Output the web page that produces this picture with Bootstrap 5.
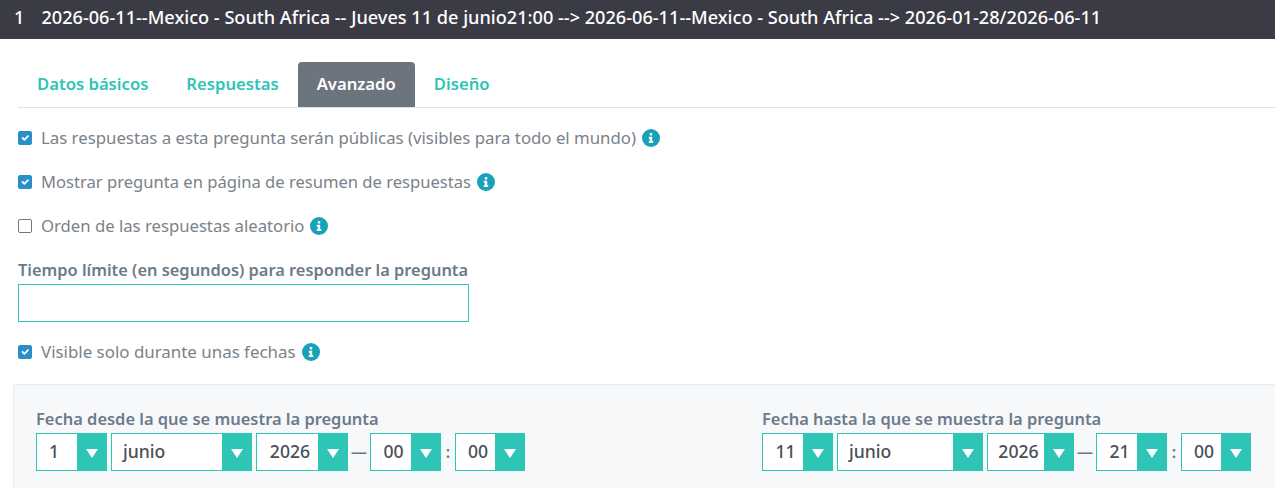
<!DOCTYPE html>
<html lang="es">
<head>
<meta charset="utf-8">
<title>Pregunta</title>
<link rel="stylesheet" href="https://cdn.jsdelivr.net/npm/bootstrap@5.3.0/dist/css/bootstrap.min.css">
<style>
html,body{height:488px;overflow:hidden}
body{font-family:"Noto Sans","Liberation Sans",sans-serif;font-size:16px;color:#6c757d;background:#fff}
.qhead{height:39px;background:#3b3b46;color:#fff;font-weight:500;font-size:18.15px;line-height:35px;padding-left:14px;white-space:nowrap}
.qhead b{font-weight:500;margin-right:17px}
.tabstrip{margin:23px 0 0 18px;border-bottom:1px solid #dee2e6;height:46px}
.tabstrip .nav-link{color:#2ec4b6;font-weight:600;font-size:16.65px;height:45px;padding:10px 19px 8px;border-radius:4px 4px 0 0}
.tabstrip .nav-link.active{background:#6c757d;color:#fff}
.formarea{padding:19px 0 0 18px}
.chk{display:flex;align-items:center;height:22px;margin-bottom:22px;padding:0;min-height:0}
.chk .form-check-input{float:none;margin:0 9px 0 0;width:14px;height:14px;border-radius:2px;border-color:#767676}
.chk .form-check-input:checked{background-color:#2a8fc9;border-color:#2a8fc9}
.chk .form-check-label{color:#7a828a;font-size:16.7px}
.chk .form-check-label.lbl-a{font-size:16.8px}
.chk .form-check-label.lbl-b{font-size:16.58px}
.chk .form-check-label.lbl-c{font-size:16.9px}
.infoic{margin-left:6px;width:18px;height:18px;flex:none}
.fieldlbl{font-weight:600;color:#6c7a89;font-size:16.4px;margin:0;line-height:22px;display:block}
.limitbox{width:451px;height:38px;border:1px solid #2ec4b6;border-radius:0;margin-top:3px;margin-bottom:19px;display:block;padding:0 8px}
.datepanel{margin-left:13px;margin-top:21px;background:#f6f8fa;border-left:1px solid #e9ecef;border-top:1px solid #e9ecef;height:104px;padding:21px 0 0 22px;display:flex}
.datecol{flex:none;width:726px}
.datecol:last-child{flex:1 1 0;width:auto;min-width:0}
.datecol .fieldlbl{line-height:25px;height:22px;font-size:16.45px}
.dtrow{display:flex;align-items:center;margin-top:5px;height:38px}
.pick{display:flex;height:38px;border:1px solid #2ec4b6;background:#fff;margin-right:4px}
.pick .val{flex:1 1 auto;color:#495057;font-size:17.6px;font-weight:500;line-height:34px;padding-left:11px}
.pick .val.ctr{padding-left:5px;padding-right:0;text-align:center}
.pick .val.oneval{padding-left:0;padding-right:6px}
.pick .drop{flex:none;width:30px;background:#2ec4b6;display:flex;align-items:center;justify-content:center;margin:-1px -1px -1px 0;padding-top:2px}
.sepc{width:22px;flex:none;text-align:center;color:#6c757d;margin-left:-4px;font-weight:600}
.sepn{width:14px;flex:none;text-align:center;color:#6c757d;font-weight:600;margin-left:-4px}
.sepn+.pick{margin-right:0}
.w71{width:71px}.w141{width:141px}.w92{width:92px}.w70{width:70px}.w146{width:146px}.w87{width:87px}
</style>
</head>
<body>
<div class="qhead"><b>1</b>2026-06-11--Mexico - South Africa -- Jueves 11 de junio21:00 --&gt; 2026-06-11--Mexico - South Africa --&gt; 2026-01-28/2026-06-11</div>
<ul class="nav tabstrip">
<li class="nav-item"><a class="nav-link" href="#">Datos básicos</a></li>
<li class="nav-item"><a class="nav-link" href="#">Respuestas</a></li>
<li class="nav-item"><a class="nav-link active" href="#">Avanzado</a></li>
<li class="nav-item"><a class="nav-link" href="#">Diseño</a></li>
</ul>
<div class="formarea">
<div class="form-check chk"><input class="form-check-input" type="checkbox" checked id="c1"><label class="form-check-label lbl-a" for="c1">Las respuestas a esta pregunta serán públicas (visibles para todo el mundo)</label>
<svg class="infoic" viewBox="0 0 18 18"><circle cx="9" cy="9" r="9" fill="#17a2b8"/><rect x="7.8" y="4" width="2.4" height="2.4" rx=".5" fill="#fff"/><path d="M6.8 7.8h3.4v4.2h1v2H6.8v-2h1V9.8h-1z" fill="#fff"/></svg></div>
<div class="form-check chk"><input class="form-check-input" type="checkbox" checked id="c2"><label class="form-check-label lbl-b" for="c2">Mostrar pregunta en página de resumen de respuestas</label>
<svg class="infoic" viewBox="0 0 18 18"><circle cx="9" cy="9" r="9" fill="#17a2b8"/><rect x="7.8" y="4" width="2.4" height="2.4" rx=".5" fill="#fff"/><path d="M6.8 7.8h3.4v4.2h1v2H6.8v-2h1V9.8h-1z" fill="#fff"/></svg></div>
<div class="form-check chk"><input class="form-check-input" type="checkbox" id="c3"><label class="form-check-label" for="c3">Orden de las respuestas aleatorio</label>
<svg class="infoic" viewBox="0 0 18 18"><circle cx="9" cy="9" r="9" fill="#17a2b8"/><rect x="7.8" y="4" width="2.4" height="2.4" rx=".5" fill="#fff"/><path d="M6.8 7.8h3.4v4.2h1v2H6.8v-2h1V9.8h-1z" fill="#fff"/></svg></div>
<label class="fieldlbl" for="lim">Tiempo límite (en segundos) para responder la pregunta</label>
<input class="limitbox" id="lim" type="text">
<div class="form-check chk mb-0"><input class="form-check-input" type="checkbox" checked id="c4"><label class="form-check-label lbl-c" for="c4">Visible solo durante unas fechas</label>
<svg class="infoic" viewBox="0 0 18 18"><circle cx="9" cy="9" r="9" fill="#17a2b8"/><rect x="7.8" y="4" width="2.4" height="2.4" rx=".5" fill="#fff"/><path d="M6.8 7.8h3.4v4.2h1v2H6.8v-2h1V9.8h-1z" fill="#fff"/></svg></div>
</div>
<div class="datepanel">
<div class="datecol">
<div class="fieldlbl">Fecha desde la que se muestra la pregunta</div>
<div class="dtrow">
<div class="pick w71"><span class="val ctr oneval">1</span><span class="drop"><svg width="12" height="9" viewBox="0 0 12 9"><path d="M0 0h12L6 9z" fill="#fff"/></svg></span></div>
<div class="pick w141"><span class="val">junio</span><span class="drop"><svg width="12" height="9" viewBox="0 0 12 9"><path d="M0 0h12L6 9z" fill="#fff"/></svg></span></div>
<div class="pick w92"><span class="val ctr">2026</span><span class="drop"><svg width="12" height="9" viewBox="0 0 12 9"><path d="M0 0h12L6 9z" fill="#fff"/></svg></span></div>
<span class="sepc">—</span>
<div class="pick w71"><span class="val ctr">00</span><span class="drop"><svg width="12" height="9" viewBox="0 0 12 9"><path d="M0 0h12L6 9z" fill="#fff"/></svg></span></div>
<span class="sepn">:</span>
<div class="pick w70"><span class="val ctr">00</span><span class="drop"><svg width="12" height="9" viewBox="0 0 12 9"><path d="M0 0h12L6 9z" fill="#fff"/></svg></span></div>
</div>
</div>
<div class="datecol">
<div class="fieldlbl">Fecha hasta la que se muestra la pregunta</div>
<div class="dtrow">
<div class="pick w71"><span class="val ctr">11</span><span class="drop"><svg width="12" height="9" viewBox="0 0 12 9"><path d="M0 0h12L6 9z" fill="#fff"/></svg></span></div>
<div class="pick w146"><span class="val">junio</span><span class="drop"><svg width="12" height="9" viewBox="0 0 12 9"><path d="M0 0h12L6 9z" fill="#fff"/></svg></span></div>
<div class="pick w87"><span class="val ctr">2026</span><span class="drop"><svg width="12" height="9" viewBox="0 0 12 9"><path d="M0 0h12L6 9z" fill="#fff"/></svg></span></div>
<span class="sepc">—</span>
<div class="pick w71"><span class="val ctr">21</span><span class="drop"><svg width="12" height="9" viewBox="0 0 12 9"><path d="M0 0h12L6 9z" fill="#fff"/></svg></span></div>
<span class="sepn">:</span>
<div class="pick w70"><span class="val ctr">00</span><span class="drop"><svg width="12" height="9" viewBox="0 0 12 9"><path d="M0 0h12L6 9z" fill="#fff"/></svg></span></div>
</div>
</div>
</div>
</body>
</html>
